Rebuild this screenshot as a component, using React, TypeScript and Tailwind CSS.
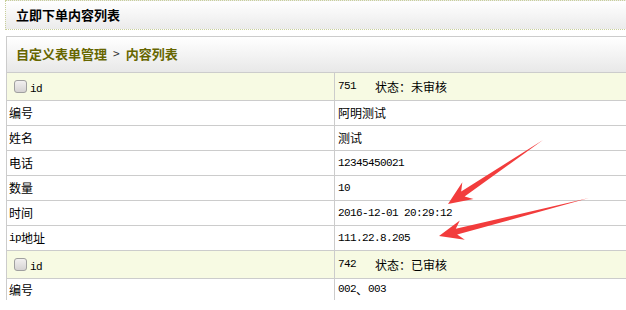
import React from "react";

const Mono: React.FC<{ children: React.ReactNode }> = ({ children }) => (
    <span className="font-['Liberation_Mono',monospace] text-[11px] tracking-[-0.6px]">{children}</span>
);

const IdRow: React.FC<{ id: string; status: string }> = ({ id, status }) => (
    <div className="flex h-[28px] border-b border-[#cccccc] bg-[#f7fae3]">
        <div className="flex w-[328px] items-center border-r border-[#cccccc] pl-[7px]">
            <span className="h-[13px] w-[13px] rounded-[3px] border border-[#a0a0a0] bg-gradient-to-b from-[#f2f0f0] to-[#d6d3d3]"></span>
            <span className="ml-[3px] mt-[2px]"><Mono>id</Mono></span>
        </div>
        <div className="flex items-center pl-[3px]">
            <Mono>{id}&nbsp;&nbsp;&nbsp;</Mono>
            <span className="ml-[1px]">状态：{status}</span>
        </div>
    </div>
);

const Row: React.FC<{ label: React.ReactNode; value: React.ReactNode; last?: boolean }> = ({ label, value, last }) => (
    <div className={last ? "flex h-[21px]" : "flex h-[25px] border-b border-[#cccccc]"}>
        <div className="flex w-[328px] items-center border-r border-[#cccccc] pl-[2px]">{label}</div>
        <div className="flex items-center pl-[3px]">{value}</div>
    </div>
);

export default function App() {
    return (
        <div className="h-[310px] w-[626px] overflow-hidden bg-white font-['Noto_Sans_CJK_SC',sans-serif] text-[12px] leading-none text-black">
            {/* PAGE TITLE */}
            <div className="ml-[5px] flex h-[30px] w-[640px] items-center border-y border-l border-dotted border-[#c9d09a] bg-gradient-to-b from-white to-[#ebebeb] pb-[1px] pl-[10px]">
                <h1 className="text-[13px] font-bold">立即下单内容列表</h1>
            </div>

            {/* PANEL */}
            <div className="ml-[6px] mt-[6px] w-[640px] border-l border-t border-[#cccccc]">
                <div className="flex h-[36px] items-center border-b border-[#cccccc] bg-gradient-to-b from-white to-[#e8e8e8] pb-[3px] pl-[9px]">
                    <span className="text-[13px] font-bold text-[#666600]">自定义表单管理</span>
                    <span className="mx-[6px] text-[12px] text-[#333]">&gt;</span>
                    <span className="text-[13px] font-bold text-[#666600]">内容列表</span>
                </div>

                <IdRow id="751" status="未审核" />
                <Row label="编号" value="阿明测试" />
                <Row label="姓名" value="测试" />
                <Row label="电话" value={<Mono>12345450021</Mono>} />
                <Row label="数量" value={<Mono>10</Mono>} />
                <Row label="时间" value={<Mono>2016-12-01 20:29:12</Mono>} />
                <Row label={<><Mono>ip</Mono>地址</>} value={<Mono>111.22.8.205</Mono>} />
                <IdRow id="742" status="已审核" />
                <Row label="编号" value={<><Mono>002</Mono>、<Mono>003</Mono></>} last />
            </div>

            {/* ARROWS */}
            <svg className="pointer-events-none absolute left-0 top-0" width="626" height="310">
                <polygon
                    points="543,140 461.2,191.4 462.3,182.3 448,204 473.5,198.9 464.6,196.4"
                    fill="#f23c3c"
                />
                <polygon
                    points="589,198 455.8,228.7 459.8,220.4 439,236 464.8,239.8 457.2,234.5"
                    fill="#f23c3c"
                />
            </svg>
        </div>
    );
}
